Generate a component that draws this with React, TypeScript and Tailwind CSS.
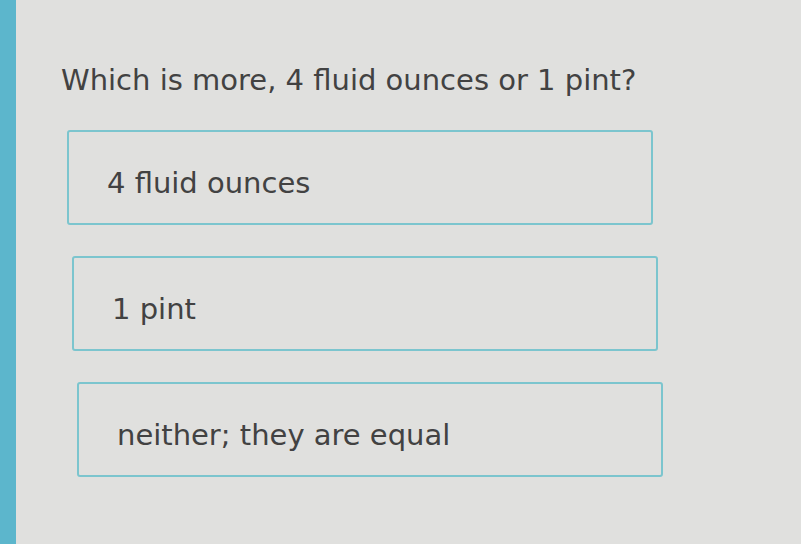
const options = ['4 fluid ounces', '1 pint', 'neither; they are equal'];

export default function App() {
  return (
    <div className="flex h-[544px] w-[801px] overflow-hidden bg-[#e0e0de] font-['DejaVu_Sans',sans-serif] text-[#424242]">
      <div className="w-[16px] shrink-0 bg-[#5cb6cc]" />
      <div className="flex flex-1 flex-col pl-[45px] pt-[61px]">
        <h1 className="text-[29px] leading-[38px]">Which is more, 4 fluid ounces or 1 pint?</h1>
        <div className="mt-[31px] flex flex-col gap-[31px] pl-[6px]">
          {options.map((opt, i) => (
            <button
              key={opt}
              className={`flex h-[95px] w-[586px] items-center rounded-[3px] border-[2.5px] border-[#7cc5ce] px-[38px] pt-[12px] text-left text-[29px] ${
                i === 1 ? 'ml-[5px]' : i === 2 ? 'ml-[10px]' : ''
              }`}
            >
              {opt}
            </button>
          ))}
        </div>
      </div>
    </div>
  );
}
